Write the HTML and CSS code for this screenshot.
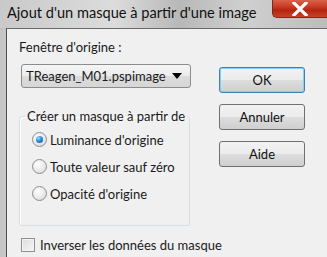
FILE: index.html
```html
<!DOCTYPE html>
<html lang="fr">

<head>
    <meta charset="UTF-8">
    <title>Ajout d'un masque à partir d'une image</title>
    <link rel="stylesheet" href="styles.css">
</head>

<body>
    <div class="window">
        <div class="titlebar">
            <span class="title">Ajout d'un masque à partir d'une image</span>
            <div class="close">
                <svg width="20" height="14" viewBox="0 0 20 14">
                    <path d="M4 1 L16 13 M16 1 L4 13" stroke="#fff" stroke-width="3.2" stroke-linecap="square"/>
                </svg>
            </div>
        </div>

        <div class="client">
            <div class="top">
                <div class="left">
                    <div class="label">Fenêtre d'origine :</div>
                    <div class="select">
                        <span>TReagen_M01.pspimage</span>
                        <span class="arrow"></span>
                    </div>

                    <fieldset class="group">
                        <legend>Créer un masque à partir de</legend>
                        <label class="radio"><span class="dot checked"></span>Luminance d'origine</label>
                        <label class="radio"><span class="dot"></span>Toute valeur sauf zéro</label>
                        <label class="radio"><span class="dot"></span>Opacité d'origine</label>
                    </fieldset>
                </div>

                <div class="buttons">
                    <button class="btn default">OK</button>
                    <button class="btn">Annuler</button>
                    <button class="btn">Aide</button>
                </div>
            </div>

            <label class="check"><span class="box"></span>Inverser les données du masque</label>
        </div>
    </div>
</body>

</html>
```

FILE: styles.css
```css
body {
    margin: 0;
    width: 327px;
    height: 257px;
    overflow: hidden;
    font-family: Lato, "Noto Sans", sans-serif;
    background: linear-gradient(90deg, #7a7a7a 0px, #9a9a9a 5px);
    white-space: nowrap;
}

.window {
    height: 257px;
    background: linear-gradient(180deg, #d2d2d2 0%, #bdbdbd 10%, #c6c6c6 12%);
}

.titlebar {
    height: 28px;
    display: flex;
    background: linear-gradient(90deg, #c9c9c9 0%, #dcdcdc 35%, #b8b8b8 55%, #d0d0d0 75%, #bcbcbc 100%);
}

.title {
    flex: 1;
    font-size: 14.6px;
    color: #111;
    padding-left: 7px;
    line-height: 26px;
}

.close {
    flex: 0 0 54px;
    height: 17px;
    border: 1px solid #7a2a1c;
    border-top: none;
    border-right: none;
    border-radius: 0 0 0 5px;
    background: linear-gradient(180deg, #d9634c 0%, #c93a22 40%, #b32510 60%, #c8432a 100%);
    display: flex;
    justify-content: center;
    align-items: center;
}

.client {
    margin-left: 6px;
    height: 228px;
    background: #f0f0f0;
    border-left: 1px solid #505050;
    border-top: 1px solid #6a6a6a;
    padding: 9px 0 0 12px;
    font-size: 13px;
    color: #1a1a1a;
}

.top {
    display: flex;
}

.left {
    width: 172px;
    flex-shrink: 0;
}

.label {
    height: 18px;
    line-height: 18px;
}

.select {
    margin: 8px 0 0 2px;
    height: 22px;
    width: 164px;
    border: 1px solid #8c8c8c;
    border-radius: 3px;
    background: linear-gradient(180deg, #f5f5f5 0%, #ebebeb 50%, #dcdcdc 51%, #d6d6d6 100%);
    display: flex;
    align-items: center;
    justify-content: space-between;
    padding: 0 0 0 4px;
}

.arrow {
    width: 0;
    height: 0;
    border-left: 5px solid transparent;
    border-right: 5px solid transparent;
    border-top: 6px solid #000;
    margin-right: 8px;
}

.group {
    margin: 20px 0 0 0;
    padding: 2px 0 18px 0;
    width: 169px;
    min-width: 0;
    border: 1px solid #d5dfe5;
    border-radius: 3px;
    box-shadow: inset 1px 1px 0 #fff;
}

.group legend {
    padding: 0 2px;
    margin-left: 5px;
    line-height: 16px;
}

.radio {
    display: flex;
    align-items: center;
    height: 27px;
    gap: 3px;
    margin-left: 12px;
}

.dot {
    width: 13px;
    height: 13px;
    border-radius: 50%;
    border: 1px solid #8f8f8f;
    background: radial-gradient(circle at 40% 35%, #ffffff 0%, #e6e6e6 60%, #cfcfcf 100%);
    display: flex;
    align-items: center;
    justify-content: center;
}

.dot.checked::after {
    content: "";
    width: 7px;
    height: 7px;
    border-radius: 50%;
    background: radial-gradient(circle at 35% 30%, #9fe0ff 0%, #2a8ad8 45%, #0e4f96 100%);
}

.buttons {
    display: flex;
    flex-direction: column;
    gap: 11px;
    margin: 29px 0 0 28px;
}

.btn {
    width: 86px;
    height: 26px;
    border: 1px solid #707070;
    border-radius: 3px;
    background: linear-gradient(180deg, #f2f2f2 0%, #ebebeb 50%, #dddddd 51%, #cfcfcf 100%);
    font-family: Lato, "Noto Sans", sans-serif;
    font-size: 13px;
    color: #111;
    padding: 0;
}

.btn.default {
    border-color: #3c7fb1;
    box-shadow: inset 0 0 0 1px #7fd3f5;
}

.check {
    display: flex;
    align-items: center;
    gap: 5px;
    margin: 11px 0 0 2px;
    line-height: 16px;
}

.box {
    width: 12px;
    height: 12px;
    border: 1px solid #8f8f8f;
    background: linear-gradient(135deg, #dcdcdc 0%, #f6f6f6 100%);
    box-shadow: inset 0 0 0 1px #f4f4f4;
}
```
